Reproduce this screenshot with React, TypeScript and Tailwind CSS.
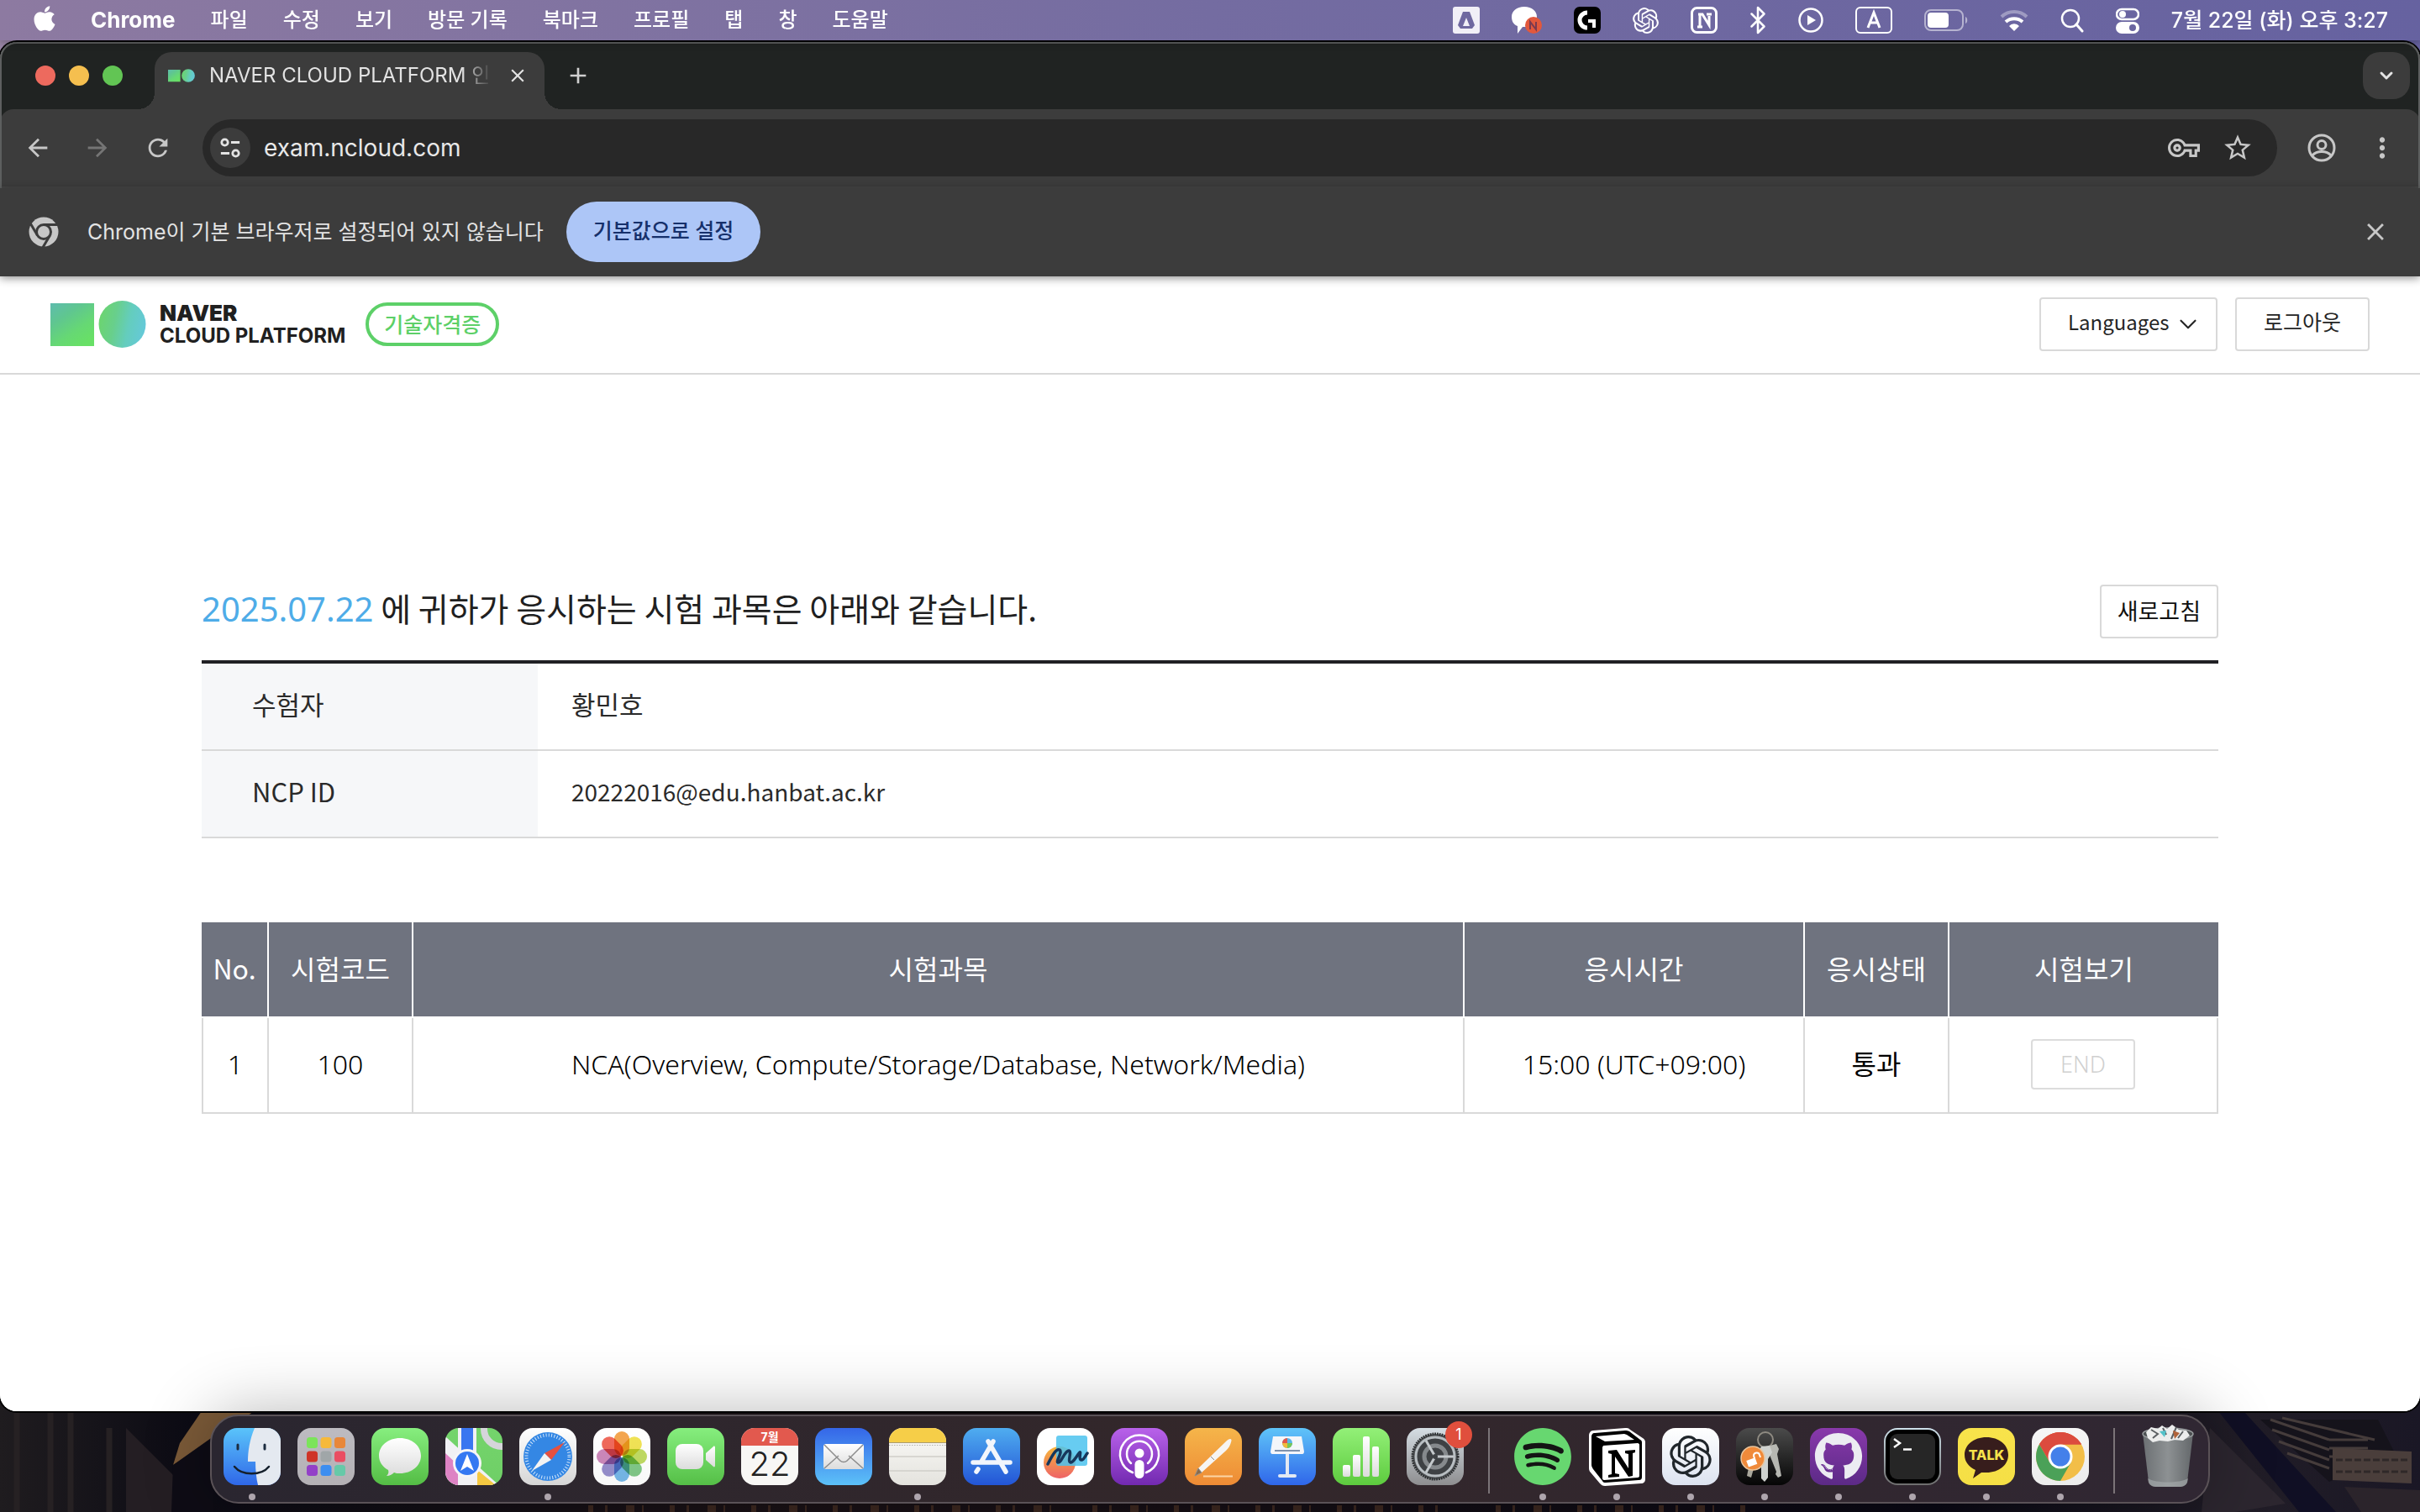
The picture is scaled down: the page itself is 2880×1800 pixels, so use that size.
import type { ReactNode } from "react";
import { FaApple, FaSpotify, FaGithub } from "react-icons/fa";
import { SiOpenai } from "react-icons/si";
import {
  MdArrowBack,
  MdArrowForward,
  MdRefresh,
  MdOutlineVpnKey,
  MdStarOutline,
  MdMoreVert,
  MdClose,
  MdAdd,
} from "react-icons/md";
import { ChevronDown, Bluetooth } from "lucide-react";

const menus = ["파일", "수정", "보기", "방문 기록", "북마크", "프로필", "탭", "창", "도움말"];

function MenuIcon({ width, children }: { width: number; children: ReactNode }) {
  return (
    <svg width={width} height={36} viewBox={`0 0 ${width} 36`} fill="none" className="shrink-0">
      {children}
    </svg>
  );
}

function MenuBar() {
  return (
    <header className="flex h-12 items-center justify-between bg-linear-to-r from-[#8d7aa1] via-[#746ca1] to-[#6662a0] pr-[38px] pl-[36px] font-['Inter','Noto_Sans_CJK_KR',sans-serif] text-[24px] leading-none font-medium text-white drop-shadow-[0_3px_4px_rgba(0,0,0,0.25)]">
      <nav className="flex items-center gap-[42px]">
        <FaApple size={34} className="-mt-1 -mr-1" />
        <span className="text-[26px] font-bold">Chrome</span>
        {menus.map((m) => (
          <span key={m}>{m}</span>
        ))}
      </nav>
      <div className="flex items-center gap-[38px]">
        <MenuIcon width={32}>
          <rect x="0" y="2" width="32" height="32" rx="3" fill="#f1eff7" />
          <path d="M12 8h8l6 16-3 4H9l-3-4z" fill="#6f68a0" />
          <path d="M16 15l4 10h-8z" fill="#f1eff7" />
        </MenuIcon>
        <MenuIcon width={36}>
          <path d="M15 2c9 0 15 5 15 12 0 8-6 12-15 12-1 0-1 0-2 0l-6 8 0-9C2 23 0 19 0 14 0 7 6 2 15 2z" fill="#fff" />
          <circle cx="26" cy="24" r="10" fill="#e2583c" />
          <path d="M22 29v-9l7 9v-9" stroke="#7a3a50" strokeWidth="2" />
        </MenuIcon>
        <MenuIcon width={32}>
          <rect y="2" width="32" height="32" rx="7" fill="#000" />
          <path d="M16 9a9 9 0 1 0 0 18" stroke="#fff" strokeWidth="5" />
          <path d="M17 19h7v8" stroke="#fff" strokeWidth="4" />
        </MenuIcon>
        <SiOpenai size={31} />
        <MenuIcon width={32}>
          <rect x="1.5" y="3.500" width="29" height="29" rx="6" stroke="#fff" strokeWidth="3" />
          <path d="M9 11h5l8 13V13m-3-2h6M11 12v14m-3 0h6" stroke="#fff" strokeWidth="3" />
        </MenuIcon>
        <Bluetooth size={36} strokeWidth={1.7} className="-mx-2" />
        <MenuIcon width={30}>
          <circle cx="15" cy="18" r="13.500" stroke="#fff" strokeWidth="2.500" />
          <path d="M11 12l10 6-10 6z" fill="#fff" />
        </MenuIcon>
        <MenuIcon width={44}>
          <rect x="1" y="3" width="42" height="30" rx="5" stroke="#fff" strokeWidth="2" />
          <path d="M15 27l7-18 7 18M17 21h10" stroke="#fff" strokeWidth="3" />
        </MenuIcon>
        <MenuIcon width={52}>
          <rect x="1" y="6" width="45" height="24" rx="7" stroke="#fff" strokeOpacity=".5" strokeWidth="2" />
          <rect x="4" y="9" width="25" height="18" rx="4" fill="#fff" />
          <path d="M49 14v8c3-1 3-7 0-8z" fill="#fff" fillOpacity=".5" />
        </MenuIcon>
        <MenuIcon width={34}>
          <path d="M2 14a22 22 0 0 1 30 0" stroke="#fff" strokeOpacity=".35" strokeWidth="4" />
          <path d="M7 20a15 15 0 0 1 20 0" stroke="#fff" strokeWidth="4" />
          <path d="M17 31l-6-6a8 8 0 0 1 12 0z" fill="#fff" />
        </MenuIcon>
        <MenuIcon width={28}>
          <circle cx="12" cy="16" r="10" stroke="#fff" strokeWidth="2.500" />
          <path d="M19 23l7 8" stroke="#fff" strokeWidth="3" strokeLinecap="round" />
        </MenuIcon>
        <MenuIcon width={28}>
          <rect x="1" y="5" width="26" height="12" rx="6" stroke="#fff" strokeWidth="2.500" />
          <circle cx="8" cy="11" r="4" fill="#fff" />
          <rect x="0" y="20" width="28" height="14" rx="7" fill="#fff" />
          <circle cx="20" cy="27" r="4" fill="#6a65a0" />
        </MenuIcon>
        <span className="text-[25px] whitespace-nowrap">7월 22일 (화) 오후 3:27</span>
      </div>
    </header>
  );
}

function BrandMark({ className }: { className?: string }) {
  return (
    <svg viewBox="0 0 114 56" className={className}>
      <defs>
        <linearGradient id="bmSq" x1="0" y1="0" x2=".7" y2="1">
          <stop offset="0" stopColor="#5fbcae" />
          <stop offset=".35" stopColor="#5fc690" />
          <stop offset=".7" stopColor="#66d874" />
          <stop offset="1" stopColor="#68e066" />
        </linearGradient>
        <linearGradient id="bmCi" x1="0" y1=".3" x2="1" y2=".5">
          <stop offset="0" stopColor="#6cd56e" />
          <stop offset=".35" stopColor="#68cf8c" />
          <stop offset=".65" stopColor="#64cdbd" />
          <stop offset="1" stopColor="#65c9d8" />
        </linearGradient>
      </defs>
      <rect x="0" y="3" width="52" height="51" fill="url(#bmSq)" />
      <circle cx="85.500" cy="28" r="28" fill="url(#bmCi)" />
    </svg>
  );
}

function ChromeMono() {
  return (
    <svg width="36" height="36" viewBox="0 0 36 36" className="shrink-0">
      <circle cx="18" cy="18" r="17.500" fill="#c7c7c7" />
      <circle cx="18" cy="18" r="10" fill="#3c3c3c" />
      <path d="M18 9.500h17M10.600 22.200L2.500 8.500M25.400 22.200L17 36.500" stroke="#3c3c3c" strokeWidth="3" />
      <circle cx="18" cy="18" r="7" fill="#c7c7c7" />
    </svg>
  );
}

function TabStrip() {
  return (
    <div className="flex h-20 items-end bg-[#202322] pr-3">
      <div className="flex h-full items-center gap-4 pl-[42px]">
        <button aria-label="닫기" className="size-6 rounded-full bg-[#ed6a5e]" />
        <button aria-label="최소화" className="size-6 rounded-full bg-[#f5bf4f]" />
        <button aria-label="확대" className="size-6 rounded-full bg-[#62c554]" />
      </div>
      <div className="relative ml-[38px] flex h-[68px] w-[464px] items-center rounded-t-[20px] bg-[#3c3c3c] pb-3 pl-4">
        <span className="absolute bottom-0 -left-5 size-5 bg-[radial-gradient(circle_at_0_0,#202322_20px,#3c3c3c_20px)]" />
        <span className="absolute -right-5 bottom-0 size-5 bg-[radial-gradient(circle_at_100%_0,#202322_20px,#3c3c3c_20px)]" />
        <BrandMark className="h-4 w-8" />
        <span className="ml-[17px] w-[336px] mask-[linear-gradient(to_right,#000_300px,transparent_336px)] font-['Inter','Noto_Sans_CJK_KR',sans-serif] text-[24px] whitespace-nowrap text-[#e3e3e3]">
          NAVER CLOUD PLATFORM 인
        </span>
        <button aria-label="탭 닫기" className="ml-[18px] text-[#e3e3e3]">
          <MdClose size={26} />
        </button>
      </div>
      <button aria-label="새 탭" className="mb-6 ml-6 text-[#d0d0d0]">
        <MdAdd size={32} />
      </button>
      <button aria-label="탭 검색" className="mb-3 ml-auto flex size-14 items-center justify-center rounded-[20px] bg-[#3c3c3c] text-[#e3e3e3]">
        <ChevronDown size={24} strokeWidth={3} />
      </button>
    </div>
  );
}

function Toolbar() {
  return (
    <div className="bg-[#202322]">
      <div className="flex h-[94px] items-center rounded-t-[16px] border-b-2 border-[#474747] bg-[#3c3c3c] pr-[26px] pl-7 text-[#c7c7c7]">
        <button aria-label="뒤로">
          <MdArrowBack size={34} />
        </button>
        <button aria-label="앞으로" className="ml-[37px] text-[#757575]">
          <MdArrowForward size={34} />
        </button>
        <button aria-label="새로고침" className="ml-[38px]">
          <MdRefresh size={34} />
        </button>
        <div className="ml-9 flex h-[68px] flex-1 items-center rounded-full bg-[#282828] pr-[28px] pl-[9px]">
          <button aria-label="사이트 정보" className="flex size-12 items-center justify-center rounded-full bg-[#3c3c3c]">
            <svg width="26" height="26" viewBox="0 0 28 28" fill="none" stroke="#e3e3e3" strokeWidth="3">
              <circle cx="7" cy="7" r="4" />
              <path d="M15 7h11M2 21h11" />
              <circle cx="21" cy="21" r="4" />
            </svg>
          </button>
          <input
            aria-label="주소창"
            defaultValue="exam.ncloud.com"
            className="ml-4 min-w-0 flex-1 bg-transparent font-['Inter','Noto_Sans_CJK_KR',sans-serif] text-[28px] text-[#e8e8e8] outline-none"
          />
          <button aria-label="비밀번호 관리">
            <MdOutlineVpnKey size={38} />
          </button>
          <button aria-label="북마크 추가" className="ml-[26px]">
            <MdStarOutline size={38} />
          </button>
        </div>
        <button aria-label="프로필" className="ml-9">
          <svg width="34" height="34" viewBox="0 0 34 34" fill="none" stroke="#c7c7c7" strokeWidth="3">
            <circle cx="17" cy="17" r="15" />
            <circle cx="17" cy="13.500" r="5" />
            <path d="M6 26c5-6 17-6 22 0" />
          </svg>
        </button>
        <button aria-label="더보기" className="ml-9">
          <MdMoreVert size={38} />
        </button>
      </div>
    </div>
  );
}

function InfoBar() {
  return (
    <div className="relative z-10 flex h-[105px] items-center bg-[#3c3c3c] pr-9 pb-px pl-[34px] font-['Inter','Noto_Sans_CJK_KR',sans-serif] text-[25px] text-[#e3e3e3] shadow-[0_2px_10px_rgba(0,0,0,0.45)]">
      <ChromeMono />
      <p className="ml-[34px] pt-0.5">Chrome이 기본 브라우저로 설정되어 있지 않습니다</p>
      <button className="ml-[27px] h-[72px] rounded-full bg-[#adc6f7] px-8 font-medium text-[#16306b]">기본값으로 설정</button>
      <button aria-label="닫기" className="ml-auto text-[#c7c7c7]">
        <MdClose size={34} />
      </button>
    </div>
  );
}

const pageFont = "font-['Noto_Sans_CJK_KR',sans-serif]";

function SiteHeader() {
  return (
    <div className="flex h-[117px] items-center justify-between border-b-2 border-[#d9d9d9] pr-[60px] pb-px pl-[60px]">
      <div className="flex items-center">
        <BrandMark className="h-14 w-[114px]" />
        <div className="ml-4 font-['Inter',sans-serif] text-[24px] leading-[27px] text-[#202020]">
          <div className="text-[26px] font-black">NAVER</div>
          <div className="font-bold">CLOUD PLATFORM</div>
        </div>
        <span className="ml-6 flex h-[52px] items-center rounded-full border-4 border-[#5dd068] px-[18px] pb-0.5 text-[25px] leading-none font-medium text-[#5dd068]">
          기술자격증
        </span>
      </div>
      <div className="flex gap-[21px] text-[25px] text-[#252525]">
        <label className="relative flex h-16 items-center rounded-[4px] border-2 border-[#d9d9d9]">
          <select aria-label="Languages" className="h-full w-[208px] appearance-none bg-transparent pb-1.5 pl-8 text-[24px] outline-none">
            <option>Languages</option>
          </select>
          <ChevronDown size={34} strokeWidth={1.5} className="pointer-events-none absolute right-[16px]" />
        </label>
        <button className="h-16 rounded-[4px] border-2 border-[#d9d9d9] px-8 pb-1.5">로그아웃</button>
      </div>
    </div>
  );
}

const exams = [
  { no: 1, code: "100", name: "NCA(Overview, Compute/Storage/Database, Network/Media)", time: "15:00 (UTC+09:00)", status: "통과" },
];

function ExamPage() {
  const th = "h-[114px] border-r-2 border-b-2 border-white bg-[#6f737f] bg-clip-padding pb-1 font-normal last:border-r-0";
  const td = "h-[114px] border-r-2 border-b-2 border-[#d9d9d9] pb-0.5 first:border-l-2";
  const infoTh = "h-[104px] w-[400px] border-b-2 border-[#d9d9d9] bg-[#f6f7f9] pb-1.5 pl-[60px] font-normal";
  const infoTd = "border-b-2 border-[#d9d9d9] pb-1.5 pl-10";
  return (
    <main className={`flex-1 bg-white ${pageFont}`}>
      <SiteHeader />
      <section className="mx-auto w-full max-w-[2400px] pt-[250px]">
        <div className="flex h-[90px] items-start justify-between">
          <h1 className="text-[39px] leading-[54px] text-[#202020]">
            <span className="font-['Noto_Sans',sans-serif] text-[40px] text-[#4eace8]">2025.07.22</span> 에 귀하가 응시하는 시험 과목은 아래와 같습니다.
          </h1>
          <button className="h-16 rounded-[4px] border-2 border-[#d9d9d9] px-[19px] pb-0.5 text-[27px] text-[#101010]">새로고침</button>
        </div>
        <table className="w-full border-separate border-spacing-0 border-t-4 border-[#202024] text-left text-[31px] text-[#2a2a2a]">
          <tbody>
            <tr>
              <th scope="row" className={infoTh}>수험자</th>
              <td className={infoTd}>황민호</td>
            </tr>
            <tr>
              <th scope="row" className={infoTh}>NCP ID</th>
              <td className={`${infoTd} text-[28px]`}>20222016@edu.hanbat.ac.kr</td>
            </tr>
          </tbody>
        </table>
        <table className="mt-[100px] w-full table-fixed border-separate border-spacing-0 text-center text-[32px] text-black">
          <colgroup>
            <col className="w-[80px]" />
            <col className="w-[172px]" />
            <col />
            <col className="w-[405px]" />
            <col className="w-[172px]" />
            <col className="w-[320px]" />
          </colgroup>
          <thead className="text-white">
            <tr>
              <th className={th}>No.</th>
              <th className={th}>시험코드</th>
              <th className={th}>시험과목</th>
              <th className={th}>응시시간</th>
              <th className={th}>응시상태</th>
              <th className={th}>시험보기</th>
            </tr>
          </thead>
          <tbody className="font-['Noto_Sans','Noto_Sans_CJK_KR',sans-serif] font-light">
            {exams.map((e) => (
              <tr key={e.no}>
                <td className={td}>{e.no}</td>
                <td className={td}>{e.code}</td>
                <td className={td}>{e.name}</td>
                <td className={td}>{e.time}</td>
                <td className={`${td} font-normal`}>{e.status}</td>
                <td className={td}>
                  <button disabled className="h-[60px] w-[124px] rounded-[4px] border-2 border-[#dcdcdc] align-middle text-[27px] text-[#d0d0d0]">
                    END
                  </button>
                </td>
              </tr>
            ))}
          </tbody>
        </table>
      </section>
    </main>
  );
}

/* ---------- Dock ---------- */

function Tile({ id, from, to, children }: { id: string; from: string; to: string; children?: ReactNode }) {
  return (
    <svg width="68" height="68" viewBox="0 0 68 68" fill="none" className="block overflow-visible">
      <defs>
        <linearGradient id={`g-${id}`} x1="0" y1="0" x2="0" y2="1">
          <stop offset="0" stopColor={from} />
          <stop offset="1" stopColor={to} />
        </linearGradient>
        <linearGradient id={`w-${id}`} x1="0" y1="0" x2="0" y2="1">
          <stop offset="0" stopColor="#fff" />
          <stop offset="1" stopColor="#dcdcdc" />
        </linearGradient>
        <clipPath id={`c-${id}`}>
          <rect width="68" height="68" rx="16" />
        </clipPath>
      </defs>
      <g clipPath={`url(#c-${id})`}>
        <rect width="68" height="68" fill={`url(#g-${id})`} />
        {children}
      </g>
    </svg>
  );
}

const Finder = () => (
  <Tile id="finder" from="#5ac4fa" to="#2f67e8">
    <path d="M37 0C31 14 29 28 29 40h9c0 10 1 20 3 28h27V0z" fill="#e4e9f0" />
    <path d="M17 20v5M49 20v5" stroke="#1c2c40" strokeWidth="3" strokeLinecap="round" />
    <path d="M13 46c9 11 32 11 41 0" stroke="#15202c" strokeWidth="2.500" strokeLinecap="round" />
  </Tile>
);

const padColors = ["#7be45a", "#f6b93a", "#e8873a", "#cf3427", "#a0a6a8", "#ea4d62", "#9340c8", "#3d8ef0", "#66c9a8"];
const Launchpad = () => (
  <Tile id="pad" from="#bdbbc1" to="#b4b1b5">
    {padColors.map((c, i) => (
      <rect key={c} x={11 + (i % 3) * 16.5} y={11 + Math.floor(i / 3) * 16.500} width="13" height="13" rx="3.500" fill={c} />
    ))}
  </Tile>
);

const Messages = () => (
  <Tile id="msg" from="#87ee7f" to="#54bd45">
    <path d="M34 12c14 0 25 9 25 21s-11 21-25 21c-3 0-5 0-7-1-2 2-5 4-9 4 2-2 3-4 2-7C13 46 9 40 9 33c0-12 11-21 25-21z" fill="url(#w-msg)" />
  </Tile>
);

const Maps = () => (
  <Tile id="maps" from="#74d46c" to="#6fcf66">
    <path d="M0 10l68 62H0z" fill="#f1f1f4" />
    <path d="M0 30l15 14v24H0z" fill="#dd83c4" />
    <path d="M38 50l22 18H38z" fill="#f5c842" />
    <path d="M15 0h22v68H15z" fill="#f1f1f4" />
    <path d="M19 0h14v40H19z" fill="#3a76f0" />
    <circle cx="67" cy="1" r="21" fill="none" stroke="#d5d5da" strokeWidth="8" />
    <circle cx="26" cy="42" r="17" fill="#f5f5f7" />
    <circle cx="26" cy="42" r="14" fill="#3478f2" />
    <path d="M26 31l8 20-8-5-8 5z" fill="#fff" />
  </Tile>
);

const Safari = () => (
  <Tile id="safari" from="#ffffff" to="#d6d6d6">
    <circle cx="34" cy="34" r="29" fill="#3487e4" />
    <circle cx="34" cy="34" r="25.500" stroke="#cfe4fa" strokeWidth="4" strokeDasharray="1 2.340" />
    <path d="M54 17L30 30l8 8z" fill="#e5503f" />
    <path d="M15 51l15-21 8 8z" fill="#f3f3f3" />
  </Tile>
);

const petals = ["#f29a38", "#efdf3e", "#b7d64c", "#6fc078", "#63aee6", "#8980c6", "#c677b0", "#ee5546"];
const Photos = () => (
  <Tile id="photos" from="#ffffff" to="#f8f8f8">
    {petals.map((c, i) => (
      <rect key={c} x="25" y="4" width="18" height="29" rx="9" fill={c} fillOpacity=".88" transform={`rotate(${i * 45} 34 34)`} style={{ mixBlendMode: "multiply" }} />
    ))}
  </Tile>
);

const FaceTime = () => (
  <Tile id="ft" from="#86ee7e" to="#55bf47">
    <rect x="10" y="19" width="33" height="30" rx="8" fill="url(#w-ft)" />
    <path d="M46 30l9-8c1-1 2 0 2 1v22c0 1-1 2-2 1l-9-8z" fill="url(#w-ft)" />
  </Tile>
);

const Calendar = () => (
  <div className="flex size-[68px] flex-col items-center overflow-hidden rounded-[16px] bg-[#f8f7f5] font-['Inter','Noto_Sans_CJK_KR',sans-serif]">
    <span className="flex h-[21px] w-full shrink-0 items-center justify-center bg-[#e2594e] text-[14px] leading-none font-bold text-white">7월</span>
    <span className="text-[40px] leading-[43px] font-light text-[#222]">22</span>
  </div>
);

const Mail = () => (
  <Tile id="mail" from="#3566e8" to="#5cc1f8">
    <rect x="10" y="19" width="48" height="30" rx="3" fill="url(#w-mail)" />
    <path d="M11 48l17-15m12 0l17 15" stroke="#8d8d8d" strokeWidth="1.500" />
    <path d="M11 20l19 19c2 2 6 2 8 0l19-19" stroke="#8d8d8d" strokeWidth="1.500" />
  </Tile>
);

const Notes = () => (
  <Tile id="notes" from="#fbfaf7" to="#e4e3de">
    <rect width="68" height="17" fill="#f6ce48" />
    <path d="M0 17.500h68" stroke="#a99b70" />
    <path d="M0 20.500h68" stroke="#b4b3ae" strokeDasharray="1.500 1.500" />
    <path d="M0 34h68M0 51h68" stroke="#cfcec9" strokeWidth="1.500" />
  </Tile>
);

const AppStore = () => (
  <Tile id="store" from="#4fadf0" to="#2355d6">
    <path d="M36 16L22 40M30 16l21 36M12 41h44M18 49l-2 3" stroke="#f2f6fc" strokeWidth="5.500" strokeLinecap="round" />
  </Tile>
);

const Freeform = () => (
  <Tile id="free" from="#ffffff" to="#ffffff">
    <defs>
      <linearGradient id="freeBall" x1="0" y1="0" x2="0" y2="1">
        <stop offset="0" stopColor="#f6b73c" />
        <stop offset="1" stopColor="#ee6366" />
      </linearGradient>
    </defs>
    <circle cx="27" cy="41" r="19" fill="url(#freeBall)" />
    <rect x="23" y="9" width="37" height="36" rx="3" fill="#4cc3ee" fillOpacity=".85" />
    <path d="M13 43c5-10 10-19 14-17 4 3-5 14-2 15 4 1 8-14 13-14 4 1-2 13 2 14 4 0 7-8 11-12 2-2-2 9 2 9 3 0 4-4 7-8" stroke="#17375c" strokeWidth="3.500" strokeLinecap="round" strokeLinejoin="round" />
  </Tile>
);

const Podcasts = () => (
  <Tile id="pod" from="#b962ea" to="#7229b0">
    <circle cx="34" cy="30" r="5.500" fill="#fff" />
    <rect x="28.500" y="38" width="11" height="22" rx="5.500" fill="#fff" />
    <path d="M24 42a15 15 0 1 1 20 0M26 53a23 23 0 1 1 16 0" stroke="#fff" strokeWidth="2.500" strokeLinecap="round" />
  </Tile>
);

const Pages = () => (
  <Tile id="pages" from="#f5b54a" to="#ee8b35">
    <path d="M22 57.500h35" stroke="#fbd5a6" strokeWidth="2" />
    <path d="M12 57l4-9 33-32c4-4 8-4 6 1-1 4-3 7-6 10L20 53z" fill="#f6f4f2" />
    <path d="M12 57l4-9 4 5zM31 34l4 4" fill="#8a6a48" stroke="#8a8a8a" strokeWidth="1" />
  </Tile>
);

const Keynote = () => (
  <Tile id="key" from="#5fc4f8" to="#2f66ea">
    <path d="M17 10h34l3 18c0 2-1 3-2 3H16c-1 0-2-1-2-3z" fill="#f4f6fa" />
    <path d="M19 27h30" stroke="#7f93ad" strokeWidth="2" />
    <circle cx="34" cy="18" r="6" fill="#58b6e8" />
    <path d="M34 18v-6a6 6 0 0 0-6 6z" fill="#e2574c" />
    <path d="M34 18h-6a6 6 0 0 0 6 6z" fill="#f2b93c" />
    <path d="M34 18v6a6 6 0 0 0 6-6z" fill="#77c656" />
    <path d="M34 31v26" stroke="#e3e9f3" strokeWidth="4" />
    <rect x="23" y="55" width="22" height="4" rx="2" fill="#e3e9f3" />
  </Tile>
);

const Numbers = () => (
  <Tile id="num" from="#93f078" to="#5dcb3e">
    <rect x="12" y="44" width="9" height="14" rx="2" fill="url(#w-num)" />
    <rect x="24" y="32" width="9" height="26" rx="2" fill="url(#w-num)" />
    <rect x="36" y="10" width="8" height="48" rx="2" fill="url(#w-num)" />
    <rect x="47" y="22" width="8" height="36" rx="2" fill="url(#w-num)" />
  </Tile>
);

const Settings = () => (
  <div className="relative">
    <Tile id="set" from="#d5dde3" to="#8e8e90">
      <circle cx="34" cy="34" r="27" fill="#55585b" stroke="#2c2f31" strokeWidth="3" strokeDasharray="1.800 1" />
      <circle cx="34" cy="34" r="23" fill="#3e4144" stroke="#b8bec2" strokeWidth="3" />
      <circle cx="34" cy="34" r="13" fill="none" stroke="#85898c" strokeWidth="5" />
      <path d="M34 34h22M34 34L23 15M34 34L23 53" stroke="#c3c8cb" strokeWidth="3" />
      <circle cx="34" cy="34" r="3" fill="#3e4144" />
    </Tile>
    <span className="absolute -top-2 -right-[10px] flex size-8 items-center justify-center rounded-full bg-[#e04f3d] font-['Inter',sans-serif] text-[18px] leading-none text-white">
      1
    </span>
  </div>
);

const Spotify = () => (
  <div className="flex size-[68px] items-center justify-center">
    <div className="flex size-[66px] shrink-0 items-center justify-center rounded-full bg-[#141414]">
      <FaSpotify size={70} color="#67d770" className="shrink-0" />
    </div>
  </div>
);

const Notion = () => (
  <svg width="68" height="68" viewBox="0 0 68 68" fill="none" className="block overflow-visible">
    <path d="M6 3L44 0c3 0 4 0 6 2l15 10c2 1 3 3 3 5v44c0 3-2 5-5 5L20 69c-3 0-4-1-6-3L3 53c-2-2-2-4-2-6V9c0-3 2-6 5-6z" fill="#fff" />
    <path d="M8 6l36-3c2 0 3 0 5 1l13 10c2 1 2 2 2 4v40c0 3-1 4-4 4L21 65c-2 0-3 0-4-2L6 49c-1-2-2-3-2-5V11c0-3 1-5 4-5z" fill="#000" />
    <path d="M9 10l34-3 3 1 9 6-35 2z" fill="#fff" />
    <path d="M18 21l41-3c1 0 2 1 2 2v37c0 1-1 2-2 2l-40 3c-1 0-2-1-2-2V23z" fill="#fff" />
    <path d="M24 27l10-1 14 22V31l-4-1v-3l12-1v3l-3 1v27l-5 1-16-24v20l5 1v3l-13 1v-3l4-1V31l-4-1z" fill="#000" />
  </svg>
);

const ChatGPT = () => (
  <div className="flex size-[68px] items-center justify-center rounded-[16px] bg-linear-to-b from-white to-[#dde3f0]">
    <SiOpenai size={50} color="#20262b" />
  </div>
);

const Keychain = () => (
  <Tile id="kc" from="#4b4b4b" to="#050505">
    <circle cx="35" cy="14" r="9" stroke="#8f8b82" strokeWidth="2" />
    <path d="M40 21l8-2 3 6-2 6 5 26-4 2-3-4 1-3-8-20-3-5z" fill="#b7b8b2" />
    <path d="M30 22l10-1 3 8-5 8 0 22-4 5-4-4V38l-5-6z" fill="#cfd2cf" />
    <path d="M24 38l-6 21-5-2 1-5 4-16z" fill="#a9a79c" />
    <circle cx="20" cy="36" r="14" fill="#f08a3a" stroke="#e8c49c" strokeWidth="1.500" />
    <rect x="13" y="37" width="11" height="8" fill="#fff" transform="rotate(-20 18 40)" />
    <path d="M22 36l-1-3c0-4 6-5 7-1l1 3" stroke="#fff" strokeWidth="2" />
  </Tile>
);

const GitHub = () => (
  <div className="flex size-[68px] items-center justify-center rounded-[16px] bg-linear-to-b from-[#8939ab] to-[#5c2a87]">
    <FaGithub size={58} color="#ececf2" />
  </div>
);

const Terminal = () => (
  <Tile id="term" from="#cfe2ec" to="#6d6d6d">
    <rect x="2" y="2" width="64" height="64" rx="14" fill="#000" />
    <rect x="7" y="7" width="54" height="54" rx="9" fill="#262626" />
    <path d="M12 13l7 5-7 5M23 25.500h10" stroke="#fff" strokeWidth="2.500" />
  </Tile>
);

const Kakao = () => (
  <div className="relative">
    <Tile id="kakao" from="#f8e34b" to="#f5df45">
      <path d="M34 11c15 0 26 9 26 21S49 53 34 53c-2 0-4 0-6 0l-10 7 3-10C13 46 8 40 8 32c0-12 11-21 26-21z" fill="#371d1c" />
    </Tile>
    <span className="absolute inset-x-0 top-[24px] text-center font-['Inter',sans-serif] text-[16px] leading-4 font-extrabold text-[#f8e34b]">TALK</span>
  </div>
);

const Chrome = () => (
  <Tile id="chrome" from="#f6f6f6" to="#ececec">
    <circle cx="34" cy="34" r="29" fill="#f2be48" />
    <path d="M34 34L8.900 19.500A29 29 0 0 1 59.100 19.500H34z" fill="#dc4b3e" />
    <path d="M34 19.500h25.100A29 29 0 0 0 8.900 19.500L21.500 41.200z" fill="#dc4b3e" />
    <path d="M8.900 19.500A29 29 0 0 0 34 63l12.500-21.700L34 34l-12.500 7.200z" fill="#4ba158" />
    <circle cx="34" cy="34" r="14.500" fill="#fff" />
    <circle cx="34" cy="34" r="11.500" fill="#4480ea" />
  </Tile>
);

const Trash = () => (
  <svg width="68" height="80" viewBox="0 0 68 80" fill="none" className="-my-1.5 block">
    <defs>
      <linearGradient id="bin" x1="0" y1="0" x2="1" y2="0">
        <stop offset="0" stopColor="#6c7073" />
        <stop offset=".5" stopColor="#8d9193" />
        <stop offset="1" stopColor="#63676a" />
      </linearGradient>
    </defs>
    <path d="M4 12h60l-7 58c-1 4-5 6-10 6H21c-5 0-9-2-10-6z" fill="url(#bin)" />
    <ellipse cx="34" cy="13" rx="30" ry="7" fill="#4c5052" stroke="#9b9fa1" strokeWidth="1.500" />
    <path d="M8 11l6-6 8 2 5-4 6 4 6-5 8 6 9 1 4 6-8 6-10-1-8 2-10-1-8 2-6-5z" fill="#eceded" />
    <path d="M14 8l8 5-6 5M28 6l4 8M44 5l-6 14M52 10l-6 8" stroke="#5c6063" strokeWidth="2" />
    <path d="M24 10l8-1-2 8z" fill="#53c1c9" />
    <path d="M40 9l8 3-6 7z" fill="#b0633a" />
    <path d="M10 66c10 6 38 6 48 0l-1 5c-2 4-5 5-10 5H21c-5 0-8-1-10-5z" fill="#a9adaf" fillOpacity=".6" />
  </svg>
);

type DockApp = { name: string; icon: ReactNode; running?: boolean };

const dockGroups: DockApp[][] = [
  [
    { name: "Finder", icon: <Finder />, running: true },
    { name: "Launchpad", icon: <Launchpad /> },
    { name: "메시지", icon: <Messages /> },
    { name: "지도", icon: <Maps /> },
    { name: "Safari", icon: <Safari />, running: true },
    { name: "사진", icon: <Photos /> },
    { name: "FaceTime", icon: <FaceTime /> },
    { name: "캘린더", icon: <Calendar /> },
    { name: "Mail", icon: <Mail /> },
    { name: "메모", icon: <Notes />, running: true },
    { name: "App Store", icon: <AppStore /> },
    { name: "Freeform", icon: <Freeform /> },
    { name: "팟캐스트", icon: <Podcasts /> },
    { name: "Pages", icon: <Pages /> },
    { name: "Keynote", icon: <Keynote /> },
    { name: "Numbers", icon: <Numbers /> },
    { name: "시스템 설정", icon: <Settings /> },
  ],
  [
    { name: "Spotify", icon: <Spotify />, running: true },
    { name: "Notion", icon: <Notion />, running: true },
    { name: "ChatGPT", icon: <ChatGPT />, running: true },
    { name: "키체인 접근", icon: <Keychain />, running: true },
    { name: "GitHub Desktop", icon: <GitHub />, running: true },
    { name: "터미널", icon: <Terminal />, running: true },
    { name: "KakaoTalk", icon: <Kakao />, running: true },
    { name: "Chrome", icon: <Chrome />, running: true },
  ],
  [{ name: "휴지통", icon: <Trash /> }],
];

function Dock() {
  return (
    <div className="relative z-20 mx-auto mt-1 mb-[10px] flex h-[106px] gap-5 rounded-[34px] border-2 border-[#5a5257] bg-linear-to-r from-[#2a2630] via-[#33272a] to-[#302733] px-[14px] pt-[14px] shadow-[0_0_80px_rgba(0,0,0,0.3)]">
      {dockGroups.map((group, i) => (
        <div key={i} className="flex gap-5">
          {i > 0 && <span className="mx-[9px] h-[78px] w-[2px] bg-[#7b7478]" />}
          {group.map((app) => (
            <button key={app.name} aria-label={app.name} className="flex w-[68px] flex-col items-center">
              {app.icon}
              {app.running && <span className="mt-[10px] size-2 shrink-0 rounded-full bg-[#aea5ad]" />}
            </button>
          ))}
        </div>
      ))}
    </div>
  );
}

function Wallpaper() {
  return (
    <svg className="absolute inset-x-0 bottom-0 h-[160px] w-full" viewBox="0 0 2880 160" preserveAspectRatio="none">
      <defs>
        <linearGradient id="night" x1="0" y1="0" x2="1" y2="0">
          <stop offset="0" stopColor="#1f1c1f" />
          <stop offset=".08" stopColor="#0c0b14" />
          <stop offset=".3" stopColor="#1a1216" />
          <stop offset=".5" stopColor="#160f15" />
          <stop offset=".8" stopColor="#0a0914" />
          <stop offset=".93" stopColor="#211d27" />
          <stop offset="1" stopColor="#1a1725" />
        </linearGradient>
      </defs>
      <rect width="2880" height="160" fill="url(#night)" />
      <path d="M20 40v120M60 40v120M84 40v120M130 60v100" stroke="#262123" strokeWidth="7" />
      <path d="M150 60l60 60v40h-60z" fill="#241e23" />
      <path d="M240 40h62l-40 30-56 34 8-26z" fill="#7b5a38" />
      <path d="M206 104l48-34v90h-50z" fill="#0e0c15" />
      <path
        d="M700 156h560M1300 156h420M1780 156h300"
        stroke="#3d2820"
        strokeWidth="8"
        strokeDasharray="6 14 3 22 10 9 2 31"
      />
      <path d="M2630 60l90 90-60 10h-40z" fill="#2c262f" />
      <path d="M2640 40h30l110 120h-44z" fill="#100f24" />
      <path d="M2690 50h140l20 40-78 34z" fill="#15131b" />
      <path d="M2702 50l70 24M2716 48l110 26M2704 62l68 24M2712 76l60 22M2722 90l50 18M2772 74h46M2772 84h46M2772 94h40" stroke="#453c3b" strokeWidth="3" />
      <path d="M2776 84l94 4v38l-94-4z" fill="#4a3e3b" />
      <path d="M2780 98h86M2780 112h86" stroke="#2f2829" strokeWidth="3" strokeDasharray="8 3" />
      <path d="M2790 130l90 4v26h-70z" fill="#2b242b" />
    </svg>
  );
}

export default function App() {
  return (
    <div className="relative flex min-h-screen flex-col overflow-hidden bg-linear-to-r from-[#9a86a6] to-[#6662a0]">
      <Wallpaper />
      <div className="relative z-10">
        <MenuBar />
      </div>
      <div className="relative mt-[2px] flex flex-1 flex-col overflow-hidden rounded-[20px] bg-white shadow-[0_0_0_2px_#000]">
        <TabStrip />
        <Toolbar />
        <InfoBar />
        <ExamPage />
        <span className="pointer-events-none absolute inset-x-0 top-0 h-[278px] rounded-t-[20px] border-x-2 border-t-2 border-[#5d5f5f]" />
      </div>
      <Dock />
    </div>
  );
}
